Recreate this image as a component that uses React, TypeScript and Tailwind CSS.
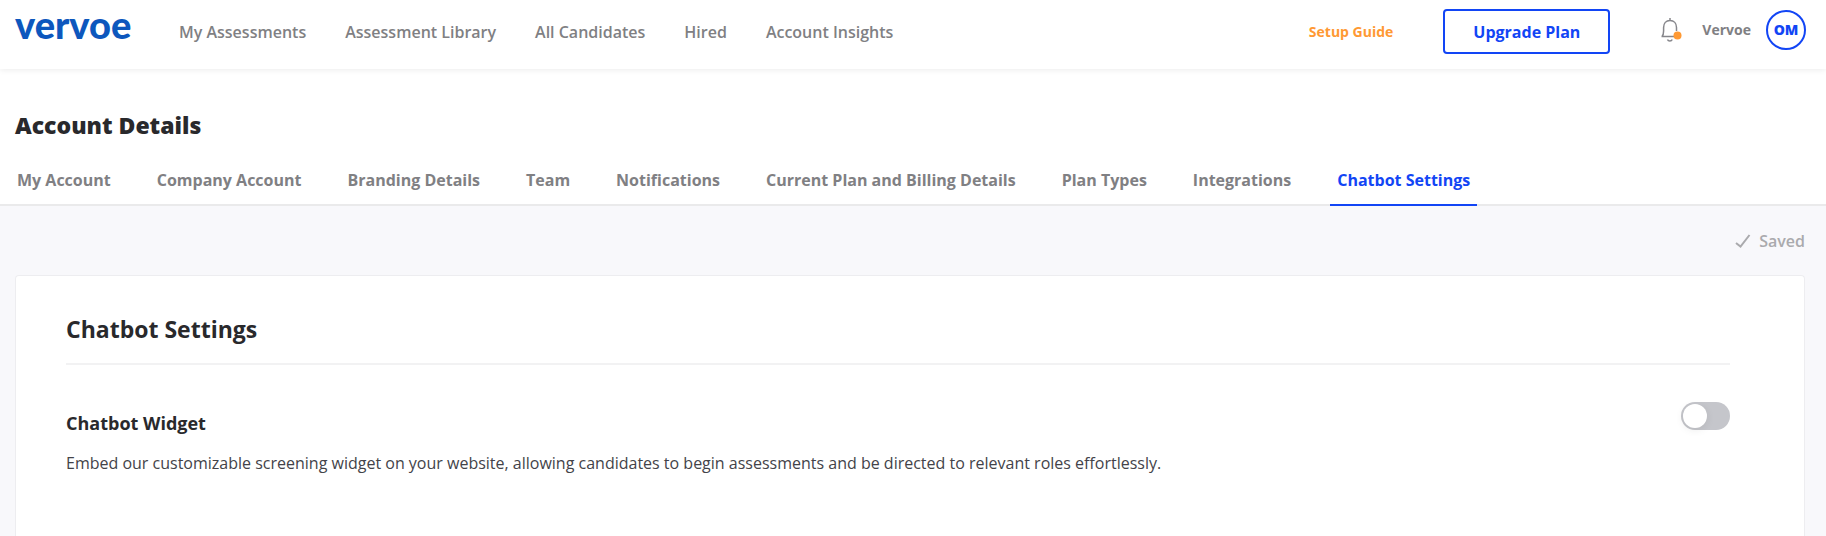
import { useState } from "react";

const navLinks = [
  "My Assessments",
  "Assessment Library",
  "All Candidates",
  "Hired",
  "Account Insights",
];

const tabs = [
  "My Account",
  "Company Account",
  "Branding Details",
  "Team",
  "Notifications",
  "Current Plan and Billing Details",
  "Plan Types",
  "Integrations",
  "Chatbot Settings",
];

function BellIcon() {
  return (
    <svg width="24" height="26" viewBox="0 0 24 26" fill="none" aria-hidden="true">
      <path
        d="M9 1v2.500M1 19.500c1.500-1.600 1.600-3 1.600-5.500V10.500C2.600 6.500 5 3.500 9 3.500s6.500 3 6.500 7V14M.5 19.500H13M6.500 22.500c.7 2 4 2 4.700 0"
        stroke="#86868b"
        strokeWidth="1.500"
      />
      <circle cx="16.500" cy="18.500" r="4" fill="#ff9933" />
    </svg>
  );
}

function Header() {
  return (
    <header className="relative flex h-[69px] shrink-0 items-start bg-white pr-5 pl-[15px] shadow-[0_1px_6px_rgba(0,0,0,0.08)]">
      <a
        href="#"
        className="w-[117px] font-['Lato',sans-serif] text-[38px] leading-[48px] font-black text-[#0d57bd]"
      >
        vervoe
      </a>

      <nav className="ml-[47px] flex gap-[39px] pt-5">
        {navLinks.map((link) => (
          <a key={link} href="#" className="text-base leading-6 font-semibold text-[#808083]">
            {link}
          </a>
        ))}
      </nav>

      <div className="ml-auto flex items-start">
        <a href="#" className="mr-[50px] pt-5 text-sm leading-6 font-bold text-[#ff9933]">
          Setup Guide
        </a>
        <button
          type="button"
          className="mt-[9px] mr-[51px] h-[45px] w-[167px] rounded border-2 border-[#1245f5] text-base font-bold text-[#1245f5]"
        >
          Upgrade Plan
        </button>
        <button type="button" aria-label="Notifications" className="mt-[17px] mr-[17px]">
          <BellIcon />
        </button>
        <span className="mr-[15px] pt-[18px] text-sm leading-6 font-bold text-[#808083]">
          Vervoe
        </span>
        <button
          type="button"
          className="mt-[10px] size-10 rounded-full border-2 border-[#1245f5] text-sm font-extrabold text-[#1245f5]"
        >
          OM
        </button>
      </div>
    </header>
  );
}

function Tabs() {
  const [active, setActive] = useState("Chatbot Settings");

  return (
    <div className="border-b-2 border-[#eaeaeb] bg-white pt-[38px] pl-[15px]">
      <h1 className="text-[23px] leading-9 font-extrabold text-[#29292c]">Account Details</h1>
      <div role="tablist" className="-mb-0.5 flex gap-8 pt-[25px]">
        {tabs.map((tab) => (
          <button
            key={tab}
            type="button"
            role="tab"
            aria-selected={tab === active}
            onClick={() => setActive(tab)}
            className={`border-b-2 px-[7px] pb-3 text-base leading-6 font-bold first:pl-0.5 ${
              tab === active
                ? "border-[#1245f5] text-[#1245f5]"
                : "border-transparent text-[#808083]"
            }`}
          >
            {tab}
          </button>
        ))}
      </div>
    </div>
  );
}

function ChatbotCard() {
  const [enabled, setEnabled] = useState(false);

  return (
    <section className="flex-1 rounded-t border border-b-0 border-[#ededf0] bg-white pt-[35px] pr-[74px] pl-[50px]">
      <h2 className="border-b-2 border-[#f2f2f3] pb-4 text-[23px] leading-9 font-bold text-[#29292c]">
        Chatbot Settings
      </h2>
      <div className="flex items-start justify-between pt-[37px]">
        <div className="pt-[7px]">
          <h3 className="text-lg leading-7 font-bold text-[#29292c]">
            <label htmlFor="chatbot-widget">Chatbot Widget</label>
          </h3>
          <p className="pt-3.5 text-base leading-6 text-[#434349]">
            Embed our customizable screening widget on your website, allowing candidates to begin
            assessments and be directed to relevant roles effortlessly.
          </p>
        </div>
        <input
          id="chatbot-widget"
          type="checkbox"
          role="switch"
          checked={enabled}
          onChange={(e) => setEnabled(e.target.checked)}
          className="flex h-7 w-[49px] shrink-0 cursor-pointer appearance-none items-center rounded-full bg-[#c5c6cb] p-0.5 before:size-6 before:rounded-full before:bg-white before:shadow-[0_2px_8px_rgba(0,0,0,0.08)] checked:justify-end checked:bg-[#1245f5]"
        />
      </div>
    </section>
  );
}

export default function App() {
  return (
    <div className="flex min-h-screen flex-col bg-[#f8f8fb] font-['Open_Sans',sans-serif]">
      <Header />
      <Tabs />
      <main className="flex flex-1 flex-col pr-[21px] pl-[15px]">
        <div className="flex items-center justify-end gap-2 pt-[23px] pb-[22px] text-base leading-6 font-semibold text-[#aaaaad]">
          <svg width="16" height="14" viewBox="0 0 16 14" fill="none" aria-hidden="true">
            <path d="M1 9l4.500 3.500L14.500 1" stroke="currentColor" strokeWidth="2" />
          </svg>
          Saved
        </div>
        <ChatbotCard />
      </main>
    </div>
  );
}
